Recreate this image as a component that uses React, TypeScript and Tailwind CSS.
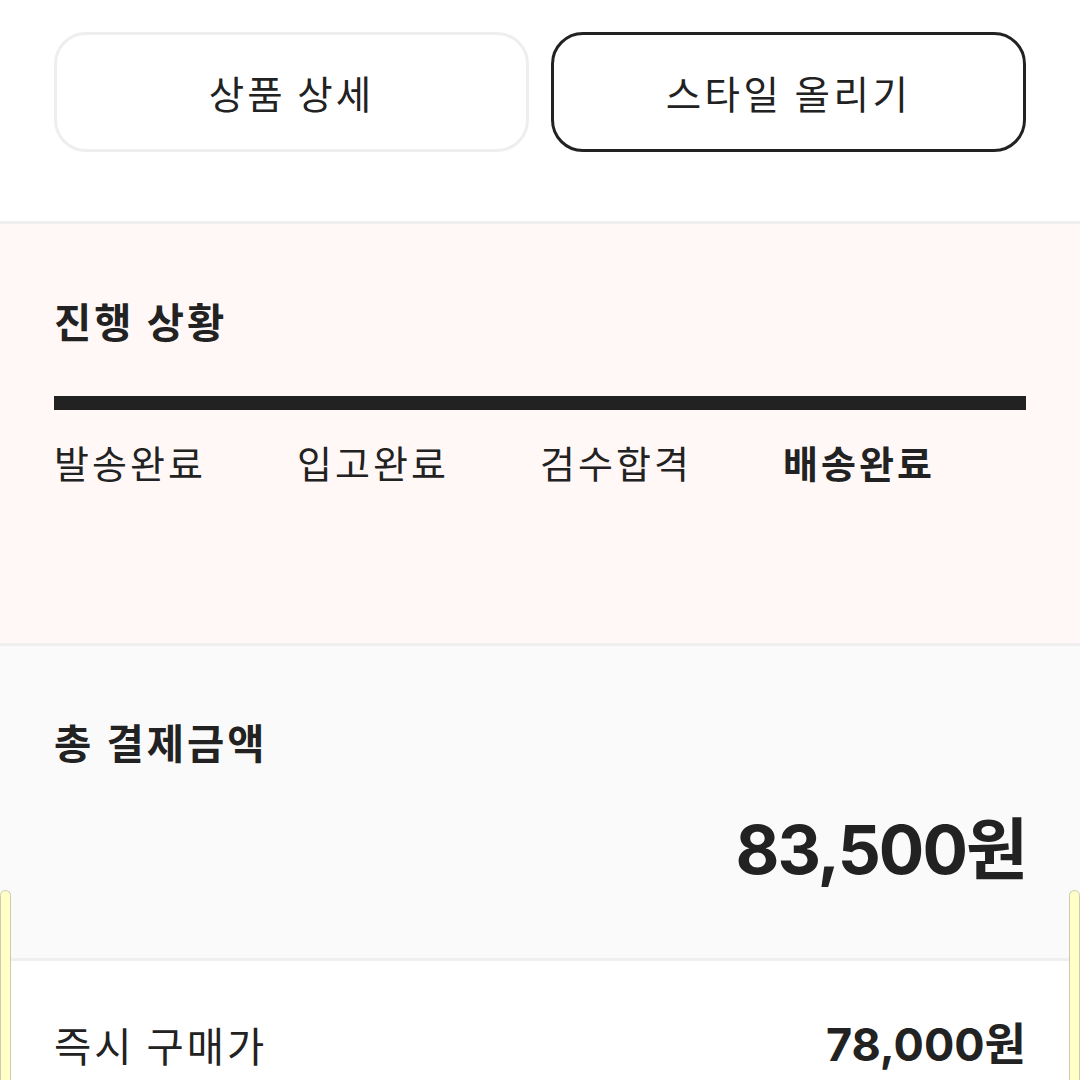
import React from "react";

const font = { fontFamily: '"Noto Sans CJK KR", "Noto Sans", sans-serif' };
const numFont = { fontFamily: 'Inter, "Noto Sans CJK KR", sans-serif' };

export default function App() {
  const steps = ["발송완료", "입고완료", "검수합격", "배송완료"];
  return (
    <div
      className="relative w-[1080px] h-[1080px] overflow-hidden bg-white text-[#222222]"
      style={font}
    >
      {/* top buttons */}
      <div className="h-[221px] px-[54px] pt-[32px] flex gap-[22px] bg-white">
        <button className="flex-1 h-[120px] rounded-[32px] border-[3px] border-[#eeeeee] bg-white text-[38.5px] tracking-[3px] leading-none text-[#222222] flex items-center justify-center">
          상품 상세
        </button>
        <button className="flex-1 h-[120px] rounded-[32px] border-[3px] border-[#222222] bg-white text-[38.5px] tracking-[3.5px] leading-none text-[#222222] flex items-center justify-center">
          스타일 올리기
        </button>
      </div>

      {/* progress */}
      <div className="h-[422px] border-t-[3px] border-[#efefef] bg-[#fff8f7] px-[54px] pt-[69px]">
        <div className="text-[40.5px] tracking-[3px] leading-[56px] font-bold">진행 상황</div>
        <div className="mt-[47px] h-[14px] bg-[#222222]" />
        <div className="mt-[26px] grid grid-cols-4">
          {steps.map((s, i) => (
            <div
              key={s}
              className={
                i === 3
                  ? "text-[38px] tracking-[3px] leading-[52px] font-bold"
                  : "text-[38px] tracking-[3px] leading-[52px] font-normal"
              }
            >
              {s}
            </div>
          ))}
        </div>
      </div>

      {/* total */}
      <div className="h-[315px] border-t-[3px] border-[#efefef] bg-[#fafafa] px-[54px] pt-[68px]">
        <div className="text-[40.5px] tracking-[3px] leading-[56px] font-bold">총 결제금액</div>
        <div
          className="mt-[40px] text-right text-[67.5px] tracking-[-2px] leading-[80px] font-bold"
          style={numFont}
        >
          83,500원
        </div>
      </div>

      {/* rows */}
      <div className="border-t-[3px] border-[#efefef] bg-white px-[54px] pt-[56px] flex items-center justify-between">
        <div className="text-[40.5px] tracking-[3px] leading-[56px]">즉시 구매가</div>
        <div className="text-[45px] leading-[56px] font-bold" style={numFont}>
          78,000원
        </div>
      </div>

      {/* side overlays */}
      <div className="absolute left-0 top-[890px] w-[11px] h-[200px] rounded-t-[6px] bg-[#ffffc6] border border-[#cccbb0]" />
      <div className="absolute right-0 top-[890px] w-[11px] h-[200px] rounded-t-[6px] bg-[#ffffc6] border border-[#cccbb0]" />
    </div>
  );
}
